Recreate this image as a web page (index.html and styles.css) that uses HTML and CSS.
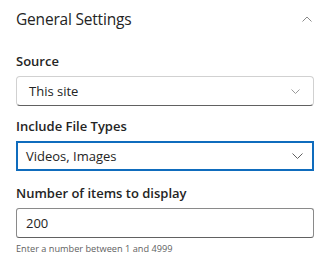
FILE: index.html
```html
<!DOCTYPE html>
<html lang="en">
<head>
  <meta charset="UTF-8">
  <title>General Settings</title>
  <link rel="stylesheet" href="styles.css">
</head>
<body>
  <div class="panel">
    <div class="panel-header">
      <span class="panel-title">General Settings</span>
      <svg class="chevron-up" width="10" height="6" viewBox="0 0 10 6"><polyline points="0.5,5.5 5,1 9.5,5.5" fill="none" stroke="#8a8a8a" stroke-width="1"/></svg>
    </div>

    <!-- Source -->
    <div class="field field-source">
      <label class="field-label">Source</label>
      <div class="select select-soft">
        <span>This site</span>
        <svg width="9" height="5" viewBox="0 0 9 5"><polyline points="0.5,0.5 4.5,4.5 8.5,0.5" fill="none" stroke="#9a9a9a" stroke-width="1"/></svg>
      </div>
    </div>

    <!-- File types -->
    <div class="field field-types">
      <label class="field-label">Include File Types</label>
      <div class="select select-focus">
        <span>Videos, Images</span>
        <svg width="11" height="6" viewBox="0 0 11 6"><polyline points="0.5,0.5 5.5,5.5 10.5,0.5" fill="none" stroke="#616161" stroke-width="1"/></svg>
      </div>
    </div>

    <!-- Item count -->
    <div class="field field-count">
      <label class="field-label">Number of items to display</label>
      <div class="text-input">200</div>
      <p class="hint">Enter a number between 1 and 4999</p>
    </div>
  </div>
</body>
</html>
```

FILE: styles.css
```css
body {
  margin: 0;
  background: #fff;
  color: #242424;
  font-family: "Open Sans", "Noto Sans", sans-serif;
}

.panel {
  padding: 0 14px 0 16px;
}

.panel-header {
  height: 38px;
  display: flex;
  align-items: center;
  justify-content: space-between;
}

.panel-title {
  font-size: 15.5px;
  letter-spacing: -0.2px;
}

.chevron-up {
  margin-right: 2px;
}

.field {
  display: flex;
  flex-direction: column;
}

.field-source {
  margin-top: 13px;
}

.field-types {
  margin-top: 10px;
}

.field-count {
  margin-top: 12px;
}

.field-label {
  font-size: 13px;
  font-weight: 600;
  line-height: 20px;
  margin-bottom: 5px;
}

.select,
.text-input {
  box-sizing: border-box;
  height: 30px;
  display: flex;
  align-items: center;
  font-size: 13px;
}

.select {
  justify-content: space-between;
}

.select-soft {
  border: 1px solid #d1d1d1;
  border-bottom-color: #616161;
  border-radius: 4px;
  padding: 0 13px 0 12px;
}

.select-focus {
  border: 2px solid #0f6cbd;
  padding: 0 9px 0 8px;
}

.text-input {
  border: 1px solid #8a8a8a;
  border-bottom-color: #616161;
  border-radius: 3px;
  padding: 0 9px;
}

.hint {
  margin: 4px 0 0;
  font-size: 9.2px;
  line-height: 14px;
  color: #616161;
}
```
